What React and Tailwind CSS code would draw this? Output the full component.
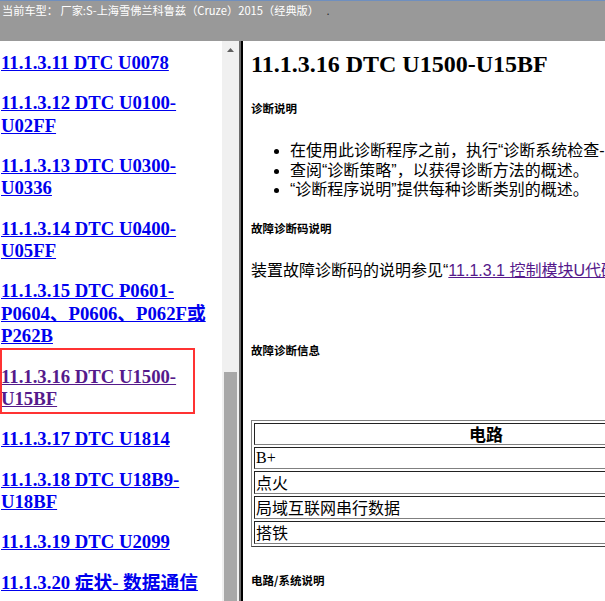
import React from "react";

const serif = { fontFamily: '"Liberation Serif", "Noto Sans CJK SC", serif' };
const sans = { fontFamily: '"Liberation Sans", "Noto Sans CJK SC", sans-serif' };
const cjk = { fontFamily: '"Noto Sans CJK SC", "Liberation Sans", sans-serif' };

const entries = [
  { t: "11.1.3.11 DTC U0078" },
  { t: "11.1.3.12 DTC U0100-U02FF" },
  { t: "11.1.3.13 DTC U0300-U0336" },
  { t: "11.1.3.14 DTC U0400-U05FF" },
  { t: "11.1.3.15 DTC P0601-P0604、P0606、P062F或P262B" },
  { t: "11.1.3.16 DTC U1500-U15BF", active: true },
  { t: "11.1.3.17 DTC U1814" },
  { t: "11.1.3.18 DTC U18B9-U18BF" },
  { t: "11.1.3.19 DTC U2099" },
  { t: "11.1.3.20 症状- 数据通信" },
];

function Label({ children, className = "" }) {
  return (
    <div className={"text-[11.5px] font-bold leading-[14px] text-black whitespace-nowrap " + className} style={cjk}>
      {children}
    </div>
  );
}

const cellBorder =
  "border-t border-l border-b border-r border-t-[#222] border-l-[#222] border-b-[#808080] border-r-[#808080]";

export default function App() {
  const rows = ["点火", "局域互联网串行数据", "搭铁"];
  return (
    <div className="w-[605px] h-[601px] overflow-hidden flex flex-col bg-white">
      <div
        className="h-[41px] shrink-0 bg-[#999999] border-t border-[#6f8fbf] text-white text-[11.2px] leading-[16px] pl-[2px] pt-[1px] whitespace-pre"
        style={cjk}
      >
        当前车型： 厂家:S-上海雪佛兰科鲁兹（Cruze）2015（经典版）   <span className="text-[#333]">.</span>
      </div>
      <div className="flex flex-1 min-h-0">
        <div className="w-[222px] shrink-0 overflow-hidden pl-[1px] pt-[11px]">
          {entries.map((e, i) => (
            <h3
              key={i}
              className={
                "relative text-[18.72px] font-bold leading-[22.4px] mb-[17.9px] underline " +
                (e.active ? "text-[#551a8b]" : "text-[#0000ee]")
              }
              style={serif}
            >
              {e.t}
              {e.active && (
                <div className="absolute top-[-18px] bottom-[-4px] left-[-1px] w-[195px] border-2 border-[#ff3333] pointer-events-none" />
              )}
            </h3>
          ))}
        </div>
        <div className="w-[17px] shrink-0 bg-[#f0f0f0] flex flex-col">
          <div className="flex justify-center pt-[7px]">
            <svg width="7" height="4" viewBox="0 0 7 4">
              <path d="M3.5 0 L7 4 L0 4 Z" fill="#606060" />
            </svg>
          </div>
          <div className="flex-1" />
          <div className="h-[229px] w-[13px] ml-[2px] bg-[#a8a8a8]" />
        </div>
        <div className="w-[2px] shrink-0 bg-[#6b6b6b]" />
        <div className="w-[2px] shrink-0 bg-black" />
        <div className="flex-1 min-w-0 overflow-hidden">
          <div className="w-[760px] pl-[8px] flex flex-col">
            <h2 className="mt-[9px] text-[24px] font-bold leading-[28px] text-black" style={serif}>
              11.1.3.16 DTC U1500-U15BF
            </h2>
            <Label className="mt-[23px]">诊断说明</Label>
            <ul className="mt-[26px] list-disc pl-[39px] text-[16px] leading-[19.5px] text-black whitespace-nowrap" style={sans}>
              <li>在使用此诊断程序之前，执行“诊断系统检查-车辆”。</li>
              <li>查阅“诊断策略”，以获得诊断方法的概述。</li>
              <li>“诊断程序说明”提供每种诊断类别的概述。</li>
            </ul>
            <Label className="mt-[21px]">故障诊断码说明</Label>
            <p className="mt-[26px] text-[16px] leading-[20px] text-black whitespace-nowrap" style={sans}>
              装置故障诊断码的说明参见“<span className="text-[#551a8b] underline">11.1.3.1 控制模块U代码列表</span>”。
            </p>
            <Label className="mt-[62px]">故障诊断信息</Label>
            <table
              className="mt-[63px] w-[470px] border-separate border-spacing-[2px] border-t border-l border-b border-r border-t-[#808080] border-l-[#808080] border-b-[#404040] border-r-[#404040]"
              style={cjk}
            >
              <tbody>
                <tr>
                  <th className={"p-0 px-[1px] " + cellBorder}>
                    <div className="h-[20.5px] leading-[20.5px] text-[17px] font-bold text-center overflow-hidden">电路</div>
                  </th>
                </tr>
                <tr>
                  <td className={"p-0 px-[1px] " + cellBorder}>
                    <div className="h-[20px] leading-[20px] text-[16px] text-left overflow-hidden" style={serif}>B+</div>
                  </td>
                </tr>
                {rows.map((r) => (
                  <tr key={r}>
                    <td className={"p-0 px-[1px] " + cellBorder}>
                      <div className="h-[21px] leading-[21px] text-[16px] text-left overflow-hidden">{r}</div>
                    </td>
                  </tr>
                ))}
              </tbody>
            </table>
            <Label className="mt-[26px]">电路/系统说明</Label>
          </div>
        </div>
      </div>
    </div>
  );
}
